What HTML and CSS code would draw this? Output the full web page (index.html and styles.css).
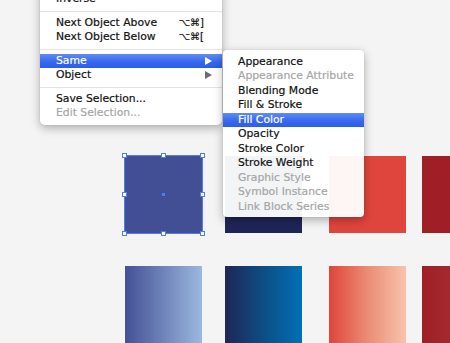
FILE: index.html
```html
<!DOCTYPE html>
<html>
    <head>
        <title>Select Same</title>
        <link rel="stylesheet" href="styles.css">
    </head>
    <body>

<!----- ARTBOARD ----->
        <div class="artboard">
            <div class="swatchRow">
                <div class="cell"><div class="swatch sBlue selected">
                    <span class="handle hTL"></span><span class="handle hTC"></span><span class="handle hTR"></span>
                    <span class="handle hML"></span><span class="centerDot"></span><span class="handle hMR"></span>
                    <span class="handle hBL"></span><span class="handle hBC"></span><span class="handle hBR"></span>
                </div></div>
                <div class="cell wide"><div class="swatch sNavy"></div></div>
                <div class="cell narrow"><div class="swatch sRed"></div></div>
                <div class="cell"><div class="swatch sDarkRed"></div></div>
            </div>
            <div class="swatchRow">
                <div class="cell"><div class="swatch gBlue"></div></div>
                <div class="cell wide"><div class="swatch gNavy"></div></div>
                <div class="cell narrow"><div class="swatch gRed"></div></div>
                <div class="cell"><div class="swatch gDarkRed"></div></div>
            </div>
        </div>

<!----- SELECT MENU ----->
        <div class="menu mainMenu">
            <div class="item">Inverse</div>
            <div class="sep"></div>
            <div class="item">Next Object Above <span class="key">⌥⌘]</span></div>
            <div class="item">Next Object Below <span class="key">⌥⌘[</span></div>
            <div class="sep"></div>
            <div class="item active">Same <span class="arrow"></span></div>
            <div class="item">Object <span class="arrow dim"></span></div>
            <div class="sep"></div>
            <div class="item">Save Selection...</div>
            <div class="item off">Edit Selection...</div>
        </div>

<!----- SAME SUBMENU ----->
        <div class="menu subMenu">
            <div class="item">Appearance</div>
            <div class="item off">Appearance Attribute</div>
            <div class="item">Blending Mode</div>
            <div class="item">Fill &amp; Stroke</div>
            <div class="item active">Fill Color</div>
            <div class="item">Opacity</div>
            <div class="item">Stroke Color</div>
            <div class="item">Stroke Weight</div>
            <div class="item off">Graphic Style</div>
            <div class="item off">Symbol Instance</div>
            <div class="item off">Link Block Series</div>
        </div>

    </body>
</html>
```

FILE: styles.css
```css
            body{
                margin: 0;
                background-color: #f4f4f4;
                font-family: "DejaVu Sans", sans-serif;
                overflow: hidden;
            }

/*----- SWATCHES -----*/
            .artboard{
                padding: 156px 0 0 125px;
                display: flex;
                flex-direction: column;
                gap: 33px;
            }
            .swatchRow{
                display: flex;
            }
            .cell{
                width: 100px;
                flex: none;
            }
            .cell.wide{ width: 104px; }
            .cell.narrow{ width: 93px; }
            .swatch{
                width: 77px;
                height: 77px;
                position: relative;
            }
            .sBlue{ background-color: #434f95; }
            .sNavy{ background-color: #1f2657; }
            .sRed{ background-color: #df453d; }
            .sDarkRed{ background-color: #a01f27; }
            .gBlue{ background: linear-gradient(to right, #435096, #9bb8de); }
            .gNavy{ background: linear-gradient(to right, #1f2657, #0f4a80 45%, #0170b5); }
            .gRed{ background: linear-gradient(to right, #df453b, #eb8c74 50%, #f8c3ad); }
            .gDarkRed{ background: linear-gradient(to right, #9f1f27, #ad3a38); }

            .selected{
                outline: 1px solid #4d7cf5;
            }
            .handle{
                position: absolute;
                width: 3px;
                height: 3px;
                border: 1px solid #4d7cf5;
                background-color: #ffffff;
            }
            .hTL, .hTC, .hTR{ top: -3px; }
            .hML, .hMR{ top: 36px; }
            .hBL, .hBC, .hBR{ bottom: -3px; }
            .hTL, .hML, .hBL{ left: -3px; }
            .hTC, .hBC{ left: 36px; }
            .hTR, .hMR, .hBR{ right: -3px; }
            .centerDot{
                position: absolute;
                top: 37px;
                left: 37px;
                width: 3px;
                height: 3px;
                background-color: #4d7cf5;
            }

/*----- MENUS -----*/
            .menu{
                position: absolute;
                background-color: rgba(255, 255, 255, 0.95);
                box-shadow: 0 3px 10px rgba(0, 0, 0, 0.3), 0 0 1px rgba(0, 0, 0, 0.3);
                font-size: 10.8px;
                color: #111111;
                -webkit-text-stroke: 0.2px;
            }
            .mainMenu{
                top: -12px;
                left: 40px;
                width: 182px;
                padding: 4px 0 4px;
                border-radius: 0 0 5px 5px;
            }
            .subMenu{
                top: 50px;
                left: 223px;
                width: 141px;
                padding: 4.5px 0 3px;
                border-radius: 4px;
            }
            .item{
                height: 14.5px;
                line-height: 14.5px;
                padding: 0 9px 0 16px;
                display: flex;
                align-items: center;
                justify-content: space-between;
                white-space: nowrap;
            }
            .subMenu .item{
                padding-left: 15px;
            }
            .item.off{
                color: #a6a6a6;
            }
            .item.active{
                color: #ffffff;
                background: linear-gradient(#5f8bf3, #3566ee 60%, #2c5de9);
            }
            .sep{
                height: 1px;
                margin: 4px 0;
                background-color: #e3e3e3;
            }
            .key{
                margin-right: 9px;
                font-size: 10px;
            }
            .arrow{
                width: 0;
                height: 0;
                margin-right: 1px;
                border-top: 4px solid transparent;
                border-bottom: 4px solid transparent;
                border-left: 7px solid #ffffff;
            }
            .arrow.dim{
                border-left-color: #6b6b6b;
            }
```
